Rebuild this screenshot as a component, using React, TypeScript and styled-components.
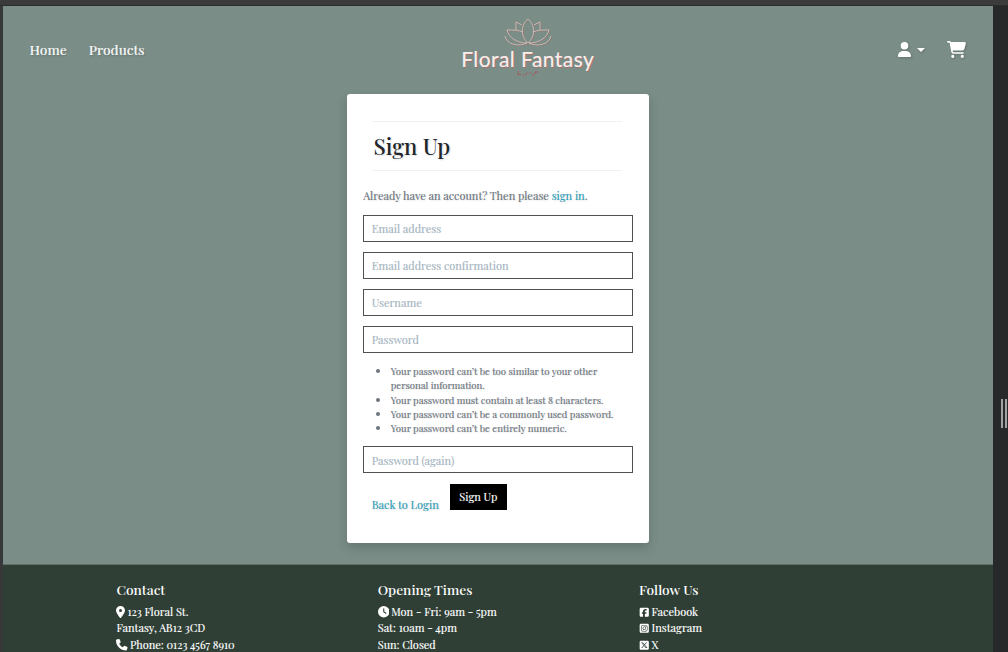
import React from "react";
import styled, { createGlobalStyle } from "styled-components";
import {
  FaCartShopping,
  FaClock,
  FaLocationDot,
  FaPhone,
  FaSquareFacebook,
  FaSquareInstagram,
  FaSquareXTwitter,
  FaUser,
} from "react-icons/fa6";

const GlobalStyle = createGlobalStyle`
  * { box-sizing: border-box; }
  body {
    margin: 0;
    background: #27282a;
    overflow: hidden;
    font-family: "Playfair Display", "Liberation Serif", serif;
    font-size: 11px;
    -webkit-text-stroke: 0.15px;
  }
`;

const Viewport = styled.div`
  display: flex;
  flex-direction: column;
  width: 1008px;
  height: 652px;
  overflow: hidden;
`;

const TopEdge = styled.div`
  flex: none;
  height: 6px;
  background: #3b3b3b;
  border-bottom: 1px solid #2b2c2d;
`;

const Frame = styled.div`
  display: flex;
  flex: 1;
  min-height: 0;
  border-left: 3px solid #37383a;
`;

const Page = styled.div`
  width: 990px;
  display: flex;
  flex-direction: column;
  background: #7a8d87;
  overflow: hidden;
`;

const DragRail = styled.div`
  width: 15px;
  display: flex;
  justify-content: flex-end;
  gap: 2px;
  padding: 393px 1px 0 0;
  background: #27282a;
`;

const Grip = styled.div`
  width: 2px;
  height: 29px;
  background: #a0a1a2;
`;

const Navbar = styled.header`
  flex: none;
  display: grid;
  grid-template-columns: 1fr 134px 1fr;
  height: 88px;
  padding: 0 27px 0 26.5px;
  color: #fff;
`;

const NavLinks = styled.nav`
  display: flex;
  gap: 22px;
  padding-top: 32px;
  font-size: 13.75px;
  font-weight: 500;
  line-height: 22px;
  color: #f4f6f5;
  text-shadow: 1px 1px 2px rgba(0, 0, 0, 0.2);
`;

const Logo = styled.div`
  display: flex;
  flex-direction: column;
  align-items: center;
  width: 134px;
  margin-left: 30px;
  padding-top: 12px;
`;

const LogoName = styled.div`
  margin-top: 1px;
  font-family: Lato, sans-serif;
  font-size: 21px;
  line-height: 24px;
  letter-spacing: 0.45px;
  color: #f8efed;
  -webkit-text-stroke: 0.2px #f8efed;
  text-shadow: 1px 0.5px 0 #a8706c;
  white-space: nowrap;
`;

const NavIcons = styled.div`
  display: flex;
  justify-content: flex-end;
  padding-top: 34px;
  filter: drop-shadow(1px 1px 1px rgba(0, 0, 0, 0.18));
`;

const Account = styled.div`
  display: flex;
  gap: 5px;
  margin-right: 22px;
  padding-top: 2px;
`;

const Caret = styled.i`
  width: 0;
  height: 0;
  margin-top: 6px;
  border: 4px solid transparent;
  border-top-color: #fff;
  border-bottom: 0;
`;

const Content = styled.main`
  flex: none;
  display: flex;
  justify-content: center;
  height: 470px;
`;

const Card = styled.section`
  width: 302.5px;
  height: 449px;
  padding: 27px 16px 0;
  border-radius: 3px;
  background: #fff;
  box-shadow: 0 5px 11px rgba(0, 0, 0, 0.16);
`;

const CardHeading = styled.h1`
  height: 50px;
  margin: 0 11px 0 10.3px;
  padding: 8px 0 0 0.4px;
  border: solid #f0f0f0;
  border-width: 1px 0;
  font-size: 22px;
  font-weight: 500;
  line-height: 32px;
  color: #212529;
  -webkit-text-stroke: 0;
  text-shadow: 1px 1px 2px rgba(0, 0, 0, 0.15);
`;

const Intro = styled.p`
  height: 18px;
  margin: 16px 0 10px 0.4px;
  line-height: 18px;
  color: #6c757d;
  white-space: nowrap;
  text-shadow: 1px 1px 2px rgba(0, 0, 0, 0.12);
`;

const Link = styled.a`
  color: #2e9db6;
`;

const Field = styled.input<{ $drop?: boolean }>`
  display: block;
  width: 100%;
  height: 26.5px;
  margin: 0 0 10.6px;
  padding: ${(p) => (p.$drop ? "2px" : "0")} 8px 0;
  border: 1px solid #4f5052;
  border-radius: 0;
  background: #fff;
  font: 11px "Playfair Display", "Liberation Serif", serif;
  &::placeholder { color: #a4b4c0; opacity: 1; }
`;

const Rules = styled.ul`
  height: 83px;
  margin: 0;
  padding: 0.7px 0 0 28px;
  font-size: 9.625px;
  line-height: 14.25px;
  color: #6c757d;
  text-shadow: 1px 1px 2px rgba(0, 0, 0, 0.12);
  li::marker { font-size: 11px; }
`;

const Actions = styled.div`
  display: flex;
  padding: 0.4px 0 0 9px;
  line-height: 18px;
`;

const BackLink = styled(Link)`
  width: 78.3px;
  padding-top: 12.5px;
  text-shadow: 1px 1px 2px rgba(0, 0, 0, 0.15);
`;

const SubmitButton = styled.button`
  width: 56.5px;
  height: 26.5px;
  padding: 0;
  border: 1px solid #000;
  background: #000;
  color: #fff;
  font: inherit;
`;

const Footer = styled.footer`
  flex: 1;
  display: grid;
  grid-template-columns: 261.3px 261.3px 1fr;
  padding: 14px 0 0 113.4px;
  border-top: 1px solid #5e7069;
  background: #2f3f36;
  color: #fff;
`;

const FooterTitle = styled.h2`
  height: 22px;
  margin: 0 0 3px;
  font-size: 13.75px;
  font-weight: 500;
  line-height: 21px;
  -webkit-text-stroke: 0;
`;

const FooterLine = styled.div`
  display: flex;
  align-items: center;
  gap: 2px;
  height: 16.4px;
  line-height: 16.4px;
  white-space: nowrap;
  svg { flex: none; }
`;

const PinIcon = styled(FaLocationDot)`
  width: 9px;
`;

function Lotus() {
  const petals =
    "M24 1C17 7 16 18 24 25C32 18 31 7 24 1ZM18 7L12 4V12M30 7L36 4V12M19 14C14 12 9 12 3 12C5 20 13 25 23 25M29 14C34 12 39 12 45 12C43 20 35 25 25 25M1 18C3 27 15 29 23 25M47 18C45 27 33 29 25 25";
  return (
    <svg width="48" height="28" viewBox="0 0 48 28" fill="none">
      <path d={petals} stroke="#9c6662" strokeWidth="0.7" transform="translate(.6 .5)" />
      <path d={petals} stroke="#e4d3cf" strokeWidth="0.7" />
    </svg>
  );
}

function LogoFlourish() {
  return (
    <svg width="22" height="5" viewBox="0 0 22 5" fill="none" stroke="#a05f5c">
      <path d="M1 0V3.5H4M6 4H8M9 4L10 1M12 3L14 1M15 4H17M18 3.5V1H21" />
    </svg>
  );
}

const rules = [
  "Your password can’t be too similar to your other personal information.",
  "Your password must contain at least 8 characters.",
  "Your password can’t be a commonly used password.",
  "Your password can’t be entirely numeric.",
];

export default function App() {
  return (
    <Viewport>
      <GlobalStyle />
      <TopEdge />
      <Frame>
        <Page>
          <Navbar>
            <NavLinks>
              <span>Home</span>
              <span>Products</span>
            </NavLinks>
            <Logo>
              <Lotus />
              <LogoName>Floral Fantasy</LogoName>
              <LogoFlourish />
            </Logo>
            <NavIcons>
              <Account>
                <FaUser size={15} />
                <Caret />
              </Account>
              <FaCartShopping size={19} />
            </NavIcons>
          </Navbar>
          <Content>
            <Card>
              <CardHeading>Sign Up</CardHeading>
              <Intro>
                Already have an account? Then please <Link>sign in</Link>.
              </Intro>
              <Field placeholder="Email address" />
              <Field placeholder="Email address confirmation" />
              <Field placeholder="Username" />
              <Field placeholder="Password" />
              <Rules>
                {rules.map((rule) => (
                  <li key={rule}>{rule}</li>
                ))}
              </Rules>
              <Field $drop placeholder="Password (again)" />
              <Actions>
                <BackLink>Back to Login</BackLink>
                <SubmitButton>Sign Up</SubmitButton>
              </Actions>
            </Card>
          </Content>
          <Footer>
            <div>
              <FooterTitle>Contact</FooterTitle>
              <FooterLine><PinIcon size={12} /><span>123 Floral St.</span></FooterLine>
              <FooterLine>Fantasy, AB12 3CD</FooterLine>
              <FooterLine><FaPhone size={11.5} /><span>Phone: 0123 4567 8910</span></FooterLine>
            </div>
            <div>
              <FooterTitle>Opening Times</FooterTitle>
              <FooterLine><FaClock size={11.5} /><span>Mon - Fri: 9am - 5pm</span></FooterLine>
              <FooterLine>Sat: 10am - 4pm</FooterLine>
              <FooterLine>Sun: Closed</FooterLine>
            </div>
            <div>
              <FooterTitle>Follow Us</FooterTitle>
              <FooterLine><FaSquareFacebook size={10.5} /><span>Facebook</span></FooterLine>
              <FooterLine><FaSquareInstagram size={10.5} /><span>Instagram</span></FooterLine>
              <FooterLine><FaSquareXTwitter size={10.5} /><span>X</span></FooterLine>
            </div>
          </Footer>
        </Page>
        <DragRail><Grip /><Grip /></DragRail>
      </Frame>
    </Viewport>
  );
}
